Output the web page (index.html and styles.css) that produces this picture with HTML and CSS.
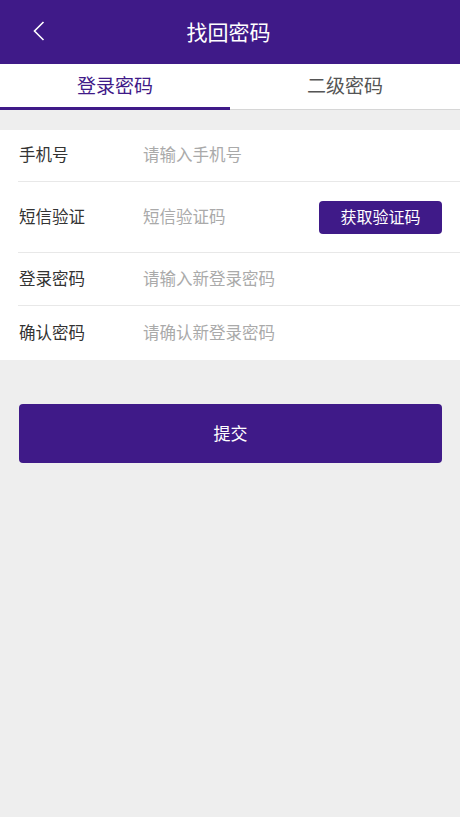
FILE: index.html
```html
<!DOCTYPE html>
<html lang="zh-CN">
<head>
<meta charset="utf-8">
<title>找回密码</title>
<link rel="stylesheet" href="styles.css">
</head>
<body>
<div class="header">
  <a class="back" href="#"><svg width="12" height="20" viewBox="0 0 12 20"><path d="M10.5 1 L1.5 10 L10.5 19" fill="none" stroke="#fff" stroke-width="1.6"/></svg></a>
  <span class="title">找回密码</span>
</div>
<div class="tabs">
  <div class="tab active">登录密码</div>
  <div class="tab">二级密码</div>
</div>
<div class="form">
  <div class="row">
    <span class="label">手机号</span>
    <input class="field" placeholder="请输入手机号">
  </div>
  <div class="row tall">
    <span class="label">短信验证</span>
    <input class="field" placeholder="短信验证码">
    <button class="code-btn">获取验证码</button>
  </div>
  <div class="row">
    <span class="label">登录密码</span>
    <input class="field" type="password" placeholder="请输入新登录密码">
  </div>
  <div class="row">
    <span class="label">确认密码</span>
    <input class="field" type="password" placeholder="请确认新登录密码">
  </div>
</div>
<div class="actions">
  <button class="submit">提交</button>
</div>
</body>
</html>
```
FILE: styles.css
```css
* { box-sizing: border-box; }
html, body { margin: 0; padding: 0; }
body {
  background: #eeeeee;
  font-family: "Noto Sans CJK SC", "Noto Sans", sans-serif;
  min-height: 817px;
}

.header {
  height: 64px; background: #3f1a88; color: #fff;
  display: flex; align-items: center; justify-content: center;
  position: relative;
}
.back { position: absolute; left: 33px; top: 21px; display: block; line-height: 0; }
.title { font-size: 21px; margin-right: 3px; padding-bottom: 2px; }

.tabs {
  display: flex; background: #fff; height: 46px;
  border-bottom: 1px solid #d6d6d6;
}
.tab {
  flex: 1; text-align: center; font-size: 19px; color: #555;
  line-height: 42px;
}
.tab.active { color: #3f1a88; border-bottom: 3px solid #3f1a88; margin-bottom: -1px; }

.form { background: #fff; margin-top: 20px; }
.row {
  display: flex; align-items: center; height: 53px;
  margin-left: 18px; padding-right: 18px;
  border-bottom: 1px solid #e8e8e8;
}
.row:first-child { height: 52px; }
.row.tall { height: 71px; }
.row:last-child { border-bottom: none; height: 54px; }
.label { width: 125px; padding-left: 1px; padding-bottom: 3px; font-size: 16.5px; color: #333; }
.field {
  flex: 1; min-width: 0; border: none; outline: none; background: transparent;
  font-family: inherit; font-size: 16.5px; color: #333; padding: 0 0 3px 0;
}
.field::placeholder { color: #aaa; }
.code-btn {
  width: 123px; height: 33px; border: none; border-radius: 4px;
  background: #3f1a88; color: #fff; font-family: inherit; font-size: 16px;
  padding: 0 0 2px 0;
}

.actions { padding: 44px 18px 0 19px; }
.submit {
  display: block; width: 100%; height: 59px; border: none; border-radius: 4px;
  background: #3f1a88; color: #fff; font-family: inherit; font-size: 17px;
  padding: 0 0 2px 0;
}
```
